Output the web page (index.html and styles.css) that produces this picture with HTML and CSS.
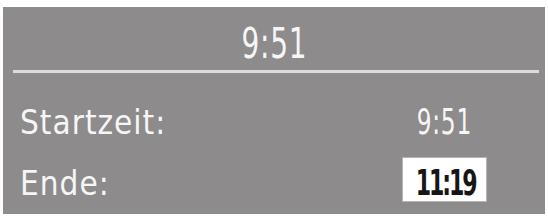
FILE: index.html
```html
<!DOCTYPE html>
<html lang="de">
<head>
<meta charset="utf-8">
<title>Timer</title>
<link rel="stylesheet" href="styles.css">
</head>
<body>
<div class="panel">
  <div class="title"><span class="digits">9:51</span></div>
  <div class="rule"></div>
  <div class="row row-start">
    <span class="label">Startzeit:</span>
    <span class="value"><span class="digits">9:51</span></span>
  </div>
  <div class="row row-end">
    <span class="label">Ende:</span>
    <span class="value value-box"><span class="digits digits-tight">11:19</span></span>
  </div>
</div>
</body>
</html>
```
FILE: styles.css
```css
html, body {
  margin: 0;
  padding: 0;
  background: #ffffff;
}
body {
  width: 548px;
  height: 218px;
  overflow: hidden;
  font-family: "DejaVu Sans Condensed", "Liberation Sans", sans-serif;
  color: #f6f6f6;
}
.panel {
  margin: 7px 3px 0 3px;
  height: 207px;
  background: #8d8b8c;
  display: flex;
  flex-direction: column;
  box-sizing: border-box;
}
.title {
  padding-top: 16px;
  height: 42px;
  font-size: 42px;
  line-height: 42px;
  text-align: center;
}
.rule {
  margin: 5px 6px 0 10px;
  height: 3px;
  background: #dcdcdc;
}
.row {
  display: flex;
  justify-content: space-between;
  align-items: baseline;
  padding: 0 59px 0 17px;
}
.label {
  font-size: 33px;
  line-height: 33px;
  letter-spacing: 1px;
}
.value {
  width: 83px;
  text-align: center;
  font-size: 35px;
  line-height: 35px;
}
.row-start {
  margin-top: 32px;
}
.row-end {
  margin-top: 18px;
}
.value-box {
  background: #ffffff;
  color: #161616;
  padding: 8px 0 0 0;
  height: 35px;
  box-shadow: 0 0 0 1px #b5b3b4;
}
.digits {
  display: inline-block;
  transform: scaleX(0.74);
  letter-spacing: 1px;
}
.digits-tight {
  letter-spacing: -3px;
  font-weight: bold;
  transform: scaleX(0.7);
}
```
